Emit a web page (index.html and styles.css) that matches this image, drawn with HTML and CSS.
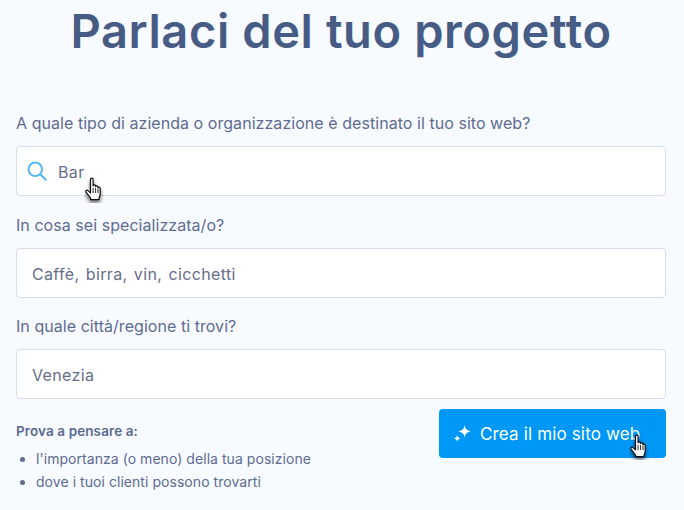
FILE: index.html
```html
<!DOCTYPE html>
<html lang="it">
<head>
<meta charset="utf-8">
<title>Parlaci del tuo progetto</title>
<link rel="stylesheet" href="styles.css">
</head>
<body>
<svg class="defs" width="0" height="0" aria-hidden="true">
  <defs>
    <filter id="cursor-shadow" x="-40%" y="-30%" width="180%" height="180%">
      <feDropShadow dx="0" dy="3" stdDeviation="2" flood-color="#000" flood-opacity=".55"/>
    </filter>
    <symbol id="hand" viewBox="0 0 20 26">
      <path filter="url(#cursor-shadow)" d="M6.500 2.200c0-1.500 2.600-1.500 2.600 0v6.600c.3-1.300 2.400-1.200 2.500.2v.6c.4-1.100 2.300-1 2.400.3v.8c.5-.9 2.200-.6 2.200.7v5.300c0 2.200-.6 3.200-1.200 4.600v1.400H6.600v-1.600c-1-1.600-2.600-3.400-4.500-5.800-1-1.300.5-2.800 1.800-1.700l2.600 2.300z" fill="#fff" stroke="#111" stroke-width="1.200" stroke-linejoin="round"/>
      <path d="M9.100 11v5M11.600 11v5M14 11.600V16" stroke="#111" stroke-width=".9" fill="none"/>
    </symbol>
  </defs>
</svg>
<main class="page">
  <h1 class="title">Parlaci del tuo progetto</h1>
  <form class="form">
    <label class="label label-first">A quale tipo di azienda o organizzazione è destinato il tuo sito web?</label>
    <div class="field">
      <svg class="search" width="22" height="22" viewBox="0 0 22 22" fill="none" stroke="#54b9f2" stroke-width="2" stroke-linecap="round"><circle cx="9.300" cy="9.300" r="6.800"/><path d="M14.300 14.300l5.600 5.400"/></svg>
      <span class="value">Bar</span>
      <svg class="cursor cursor-field" width="20" height="26"><use href="#hand"/></svg>
    </div>
    <label class="label">In cosa sei specializzata/o?</label>
    <div class="field"><span class="value">Caffè, birra, vin, cicchetti</span></div>
    <label class="label">In quale città/regione ti trovi?</label>
    <div class="field"><span class="value">Venezia</span></div>
    <div class="bottom">
      <div class="tips">
        <p class="tips-title">Prova a pensare a:</p>
        <ul class="tips-list">
          <li>l'importanza (o meno) della tua posizione</li>
          <li>dove i tuoi clienti possono trovarti</li>
        </ul>
      </div>
      <button class="button" type="button">
        <svg class="sparkle" width="19" height="19" viewBox="0 0 18 18" fill="#fff"><path d="M11 1c.5 3.600 2 5.300 6 6-4 .7-5.500 2.400-6 6-.5-3.600-2-5.300-6-6 4-.7 5.500-2.400 6-6z"/><path d="M4 10.500c.3 2 1.100 2.900 3.200 3.300-2.100.4-2.900 1.300-3.200 3.200-.3-1.900-1.100-2.800-3.200-3.200 2.100-.4 2.900-1.300 3.200-3.300z"/></svg>
        <span>Crea il mio sito web</span>
        <svg class="cursor cursor-button" width="20" height="26"><use href="#hand"/></svg>
      </button>
    </div>
  </form>
</main>
</body>
</html>
```
FILE: styles.css
```css
* { box-sizing: border-box; }
html, body { margin: 0; padding: 0; }
body {
  width: 684px;
  height: 510px;
  overflow: hidden;
  background: #f7faff;
  color: #5e6c8f;
  font-family: "Inter", "Liberation Sans", sans-serif;
}
.defs { position: absolute; }
.page { padding: 0 18px 0 16px; }
.title {
  margin: 0;
  padding-top: 3px;
  height: 58px;
  font-size: 47px;
  line-height: 55px;
  font-weight: 600;
  letter-spacing: .6px;
  text-align: center;
  color: #465c85;
}
.form { display: flex; flex-direction: column; }
.label {
  display: block;
  font-size: 16px;
  line-height: 20px;
  letter-spacing: .05px;
  color: #5e6c8f;
  margin: 18.500px 0 13px;
}
.label-first { margin-top: 0; padding-top: 55px; }
.field {
  position: relative;
  display: flex;
  align-items: center;
  gap: 9px;
  height: 50px;
  padding: 2px 15px 0;
  background: #fff;
  border: 1px solid #d7deeb;
  border-radius: 4px;
}
.search { margin-left: -6px; margin-top: -3px; margin-right: 1px; flex: none; }
.value {
  font-size: 16px;
  letter-spacing: .35px;
  word-spacing: 1.500px;
  color: #666e8a;
}
.bottom {
  display: flex;
  justify-content: space-between;
  align-items: flex-start;
  margin-top: 10px;
}
.tips { padding-top: 13px; font-size: 14px; letter-spacing: .05px; }
.tips-title { margin: 0; font-size: 13.500px; letter-spacing: .1px; font-weight: 600; line-height: 18px; color: #5b6a8c; }
.tips-list { margin: 7px 0 0; padding: 0 0 0 20px; line-height: 23px; }
.button {
  position: relative;
  display: flex;
  align-items: center;
  gap: 8px;
  width: 227px;
  height: 49px;
  padding: 0 14px;
  background: #0098f7;
  border: 0;
  border-radius: 4px;
  color: #fff;
  font-family: "Inter", "Liberation Sans", sans-serif;
  font-size: 17px;
  letter-spacing: .15px;
}
.cursor { position: absolute; overflow: visible; }
.cursor-field { left: 67px; top: 30px; }
.cursor-button { left: 190px; top: 25px; }
```
